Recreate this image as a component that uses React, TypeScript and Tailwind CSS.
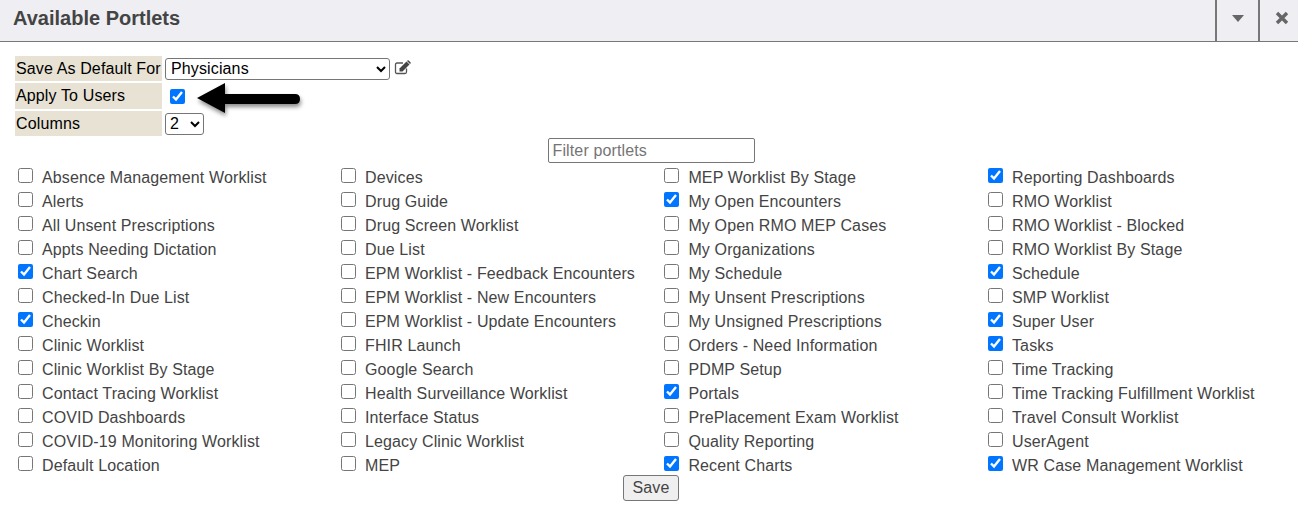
const columns: [string, boolean][][] = [
  [
    ["Absence Management Worklist", false],
    ["Alerts", false],
    ["All Unsent Prescriptions", false],
    ["Appts Needing Dictation", false],
    ["Chart Search", true],
    ["Checked-In Due List", false],
    ["Checkin", true],
    ["Clinic Worklist", false],
    ["Clinic Worklist By Stage", false],
    ["Contact Tracing Worklist", false],
    ["COVID Dashboards", false],
    ["COVID-19 Monitoring Worklist", false],
    ["Default Location", false],
  ],
  [
    ["Devices", false],
    ["Drug Guide", false],
    ["Drug Screen Worklist", false],
    ["Due List", false],
    ["EPM Worklist - Feedback Encounters", false],
    ["EPM Worklist - New Encounters", false],
    ["EPM Worklist - Update Encounters", false],
    ["FHIR Launch", false],
    ["Google Search", false],
    ["Health Surveillance Worklist", false],
    ["Interface Status", false],
    ["Legacy Clinic Worklist", false],
    ["MEP", false],
  ],
  [
    ["MEP Worklist By Stage", false],
    ["My Open Encounters", true],
    ["My Open RMO MEP Cases", false],
    ["My Organizations", false],
    ["My Schedule", false],
    ["My Unsent Prescriptions", false],
    ["My Unsigned Prescriptions", false],
    ["Orders - Need Information", false],
    ["PDMP Setup", false],
    ["Portals", true],
    ["PrePlacement Exam Worklist", false],
    ["Quality Reporting", false],
    ["Recent Charts", true],
  ],
  [
    ["Reporting Dashboards", true],
    ["RMO Worklist", false],
    ["RMO Worklist - Blocked", false],
    ["RMO Worklist By Stage", false],
    ["Schedule", true],
    ["SMP Worklist", false],
    ["Super User", true],
    ["Tasks", true],
    ["Time Tracking", false],
    ["Time Tracking Fulfillment Worklist", false],
    ["Travel Consult Worklist", false],
    ["UserAgent", false],
    ["WR Case Management Worklist", true],
  ],
];

function PortletRow({ name, checked }: { name: string; checked: boolean }) {
  return (
    <label className="flex h-[24px] items-center">
      <input
        type="checkbox"
        defaultChecked={checked}
        className="m-0 mb-[6px] h-[15px] w-[15px] shrink-0 accent-[#0075ff]"
      />
      <span className="ml-[9px] whitespace-nowrap text-[16px] tracking-[0.13px] text-[#444444]">
        {name}
      </span>
    </label>
  );
}

export default function App() {
  return (
    <div className="h-[523px] w-[1298px] overflow-hidden bg-white font-['Liberation_Sans',Arial,sans-serif]">
      {/* Header */}
      <div className="flex h-[42px] items-stretch border-b border-[#777777] bg-[#eeeef3]">
        <h1 className="flex-1 pb-[5px] pl-[13px] text-[20px] font-bold leading-[37px] text-[#444444]">
          Available Portlets
        </h1>
        <div className="flex w-[43px] items-center justify-center border-l-2 border-[#777777] pb-[5px]">
          <div className="h-0 w-0 border-x-[6px] border-t-[7px] border-x-transparent border-t-[#666666]" />
        </div>
        <div className="flex w-[40px] items-center justify-center border-l-2 border-[#777777] pb-[5px] pl-[5px]">
          <svg width="14" height="14" viewBox="0 0 14 14">
            <path d="M2 2 L12 12 M12 2 L2 12" stroke="#666666" strokeWidth="3.4" />
          </svg>
        </div>
      </div>

      {/* Settings table */}
      <div className="ml-[15px] mt-[14px] grid grid-cols-[147px_auto] justify-start gap-x-[3px] gap-y-[2px] text-[16px] tracking-[0.13px] text-black">
        <div className="flex h-[25px] items-center whitespace-nowrap bg-[#e8e2d4] pl-[1px]">
          Save As Default For
        </div>
        <div className="flex h-[25px] items-center gap-[4px]">
          <select className="h-[22px] w-[225px] rounded-[3px] border border-[#767676] bg-white pl-[1px] text-[16px]">
            <option>Physicians</option>
          </select>
          {/* Edit icon */}
          <svg width="18" height="15" viewBox="0 0 18 15" className="mb-[2px]">
            <path
              d="M12.5 8.5 V12 Q12.5 13.5 11 13.5 H3 Q1.5 13.5 1.5 12 V4.5 Q1.5 3 3 3 H9"
              fill="none"
              stroke="#555555"
              strokeWidth="1.3"
            />
            <path d="M5.5 8.5 L12.5 1.5 L15.5 4.5 L8.5 11.5 L5.5 11.5 Z" fill="#444444" />
            <path d="M13.5 0.5 Q14 0 14.7 0.5 L16.5 2.3 Q17 3 16.5 3.5 L16 4 L13 1 Z" fill="#444444" />
          </svg>
        </div>
        <div className="flex h-[26px] items-center bg-[#e8e2d4] pl-[1px]">Apply To Users</div>
        <div className="relative flex h-[26px] items-center pl-[5px]">
          <input
            type="checkbox"
            defaultChecked
            className="m-0 h-[15px] w-[15px] accent-[#0075ff]"
          />
          {/* Annotation arrow */}
          <svg
            className="absolute left-[32px] top-0 drop-shadow-[1px_3px_2px_rgba(0,0,0,0.45)]"
            width="112"
            height="36"
            viewBox="0 0 112 36"
          >
            <path
              d="M0 15 L28 0 L28 11 L98 11 Q103 11 103 16 Q103 21 98 21 L28 21 L28 30 Z"
              fill="#000000"
            />
          </svg>
        </div>
        <div className="flex h-[25px] items-center bg-[#e8e2d4] pl-[1px]">Columns</div>
        <div className="flex h-[25px] items-center">
          <select className="h-[22px] w-[39px] rounded-[3px] border border-[#767676] bg-white text-[16px]">
            <option>2</option>
          </select>
        </div>
      </div>

      {/* Filter */}
      <div className="mt-[2px] flex justify-center">
        <input
          type="text"
          placeholder="Filter portlets"
          className="ml-[4px] h-[25px] w-[207px] rounded-[2px] border border-[#767676] px-[4px] text-[16px] tracking-[0.13px] text-[#444444] placeholder:text-[#757575]"
        />
      </div>

      {/* Portlet list */}
      <div className="ml-[18px] mt-[3px] grid grid-cols-[323px_323.4px_323.6px_auto]">
        {columns.map((col, i) => (
          <div key={i}>
            {col.map(([name, checked]) => (
              <PortletRow key={name} name={name} checked={checked} />
            ))}
          </div>
        ))}
      </div>

      <div className="flex justify-center">
        <button className="ml-[4px] mt-[-3px] h-[26px] w-[56px] rounded-[3px] border border-[#767676] bg-[#efefef] text-[16px] tracking-[0.13px] text-[#444444]">
          Save
        </button>
      </div>
    </div>
  );
}
